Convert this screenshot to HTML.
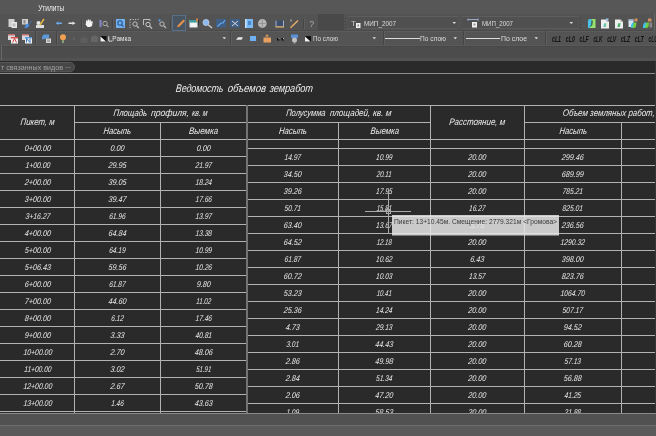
<!DOCTYPE html>
<html><head><meta charset="utf-8">
<style>
html,body{margin:0;padding:0;}
body{width:656px;height:436px;overflow:hidden;position:relative;background:#545454;font-family:"Liberation Sans",sans-serif;}
.a{position:absolute;}
#menu{left:0;top:0;width:656px;height:14px;background:#575757;}
#tb1{left:0;top:14px;width:656px;height:17px;background:#535353;}
#tb2{left:0;top:31px;width:656px;height:14px;background:#545454;}
#band{left:0;top:45px;width:656px;height:16px;background:#4c4c4c;}
#strip{left:0;top:61px;width:656px;height:13px;background:#2a2a2a;}
#draw{left:0;top:74px;width:656px;height:340px;background:#2a2a2a;}
#bottom{left:0;top:413px;width:656px;height:23px;background:#545454;}
svg{will-change:transform;}
svg text{font-family:"Liberation Sans",sans-serif;font-style:italic;}

</style></head><body>
<div id="menu" class="a"></div>
<div id="tb1" class="a"></div>
<div id="tb2" class="a"></div>
<div id="band" class="a"></div>
<div id="strip" class="a"></div>
<div id="draw" class="a"></div>
<div id="bottom" class="a"></div>

<svg class="a" style="left:0;top:0" width="656" height="436" viewBox="0 0 656 436">
<rect x="2" y="30" width="652" height="1" fill="#4a4a4a" />
<rect x="2" y="31" width="652" height="1" fill="#5c5c5c" />
<rect x="318" y="14" width="26" height="16" fill="#494949" />
<rect x="348" y="16" width="110" height="13" fill="#505050" />
<rect x="348" y="16" width="110" height="1" fill="#5e5e5e" />
<rect x="348" y="28" width="110" height="1" fill="#5c5c5c" />
<rect x="462" y="16" width="116" height="13" fill="#505050" />
<rect x="462" y="16" width="116" height="1" fill="#5e5e5e" />
<rect x="462" y="28" width="116" height="1" fill="#5c5c5c" />
<rect x="345" y="18" width="1" height="1" fill="#3c3c3c" />
<rect x="345" y="21" width="1" height="1" fill="#3c3c3c" />
<rect x="345" y="24" width="1" height="1" fill="#3c3c3c" />
<rect x="345" y="27" width="1" height="1" fill="#3c3c3c" />
<rect x="580" y="18" width="1" height="1" fill="#3c3c3c" />
<rect x="580" y="21" width="1" height="1" fill="#3c3c3c" />
<rect x="580" y="24" width="1" height="1" fill="#3c3c3c" />
<rect x="580" y="27" width="1" height="1" fill="#3c3c3c" />
<rect x="8.5" y="19" width="6" height="8" fill="#cfcfcf" />
<rect x="11.5" y="22" width="5.5" height="6" fill="#e6e6e6" />
<rect x="12.5" y="23.5" width="3" height="3" fill="#bdbdbd" />
<rect x="22" y="19" width="6" height="5.5" fill="#d0d0d0" />
<rect x="23.5" y="20" width="2" height="3.5" fill="#8a8a8a" />
<path d="M24.5,28 L25.5,25 L28,23.5 L29.5,25 L28,27.5 Z" fill="#4a8fe0" />
<path d="M28.5,24.5 L32,20.5" fill="none" stroke="#3a70c0" stroke-width="1" />
<circle cx="38.5" cy="23" r="2" fill="#e8e8e8"/>
<rect x="36" y="25" width="8" height="3" fill="#dedede" />
<path d="M40,25 L44,19" fill="none" stroke="#e0b040" stroke-width="1.6" />
<path d="M55.5,23.2 L58.5,21.5 L58.5,22.6 L62,22.6 L62,23.9 L58.5,23.9 L58.5,25 Z" fill="#6aa8e8" />
<path d="M75.5,23.2 L72.5,21.5 L72.5,22.6 L68.5,22.6 L68.5,23.9 L72.5,23.9 L72.5,25 Z" fill="#e2e2e2" />
<rect x="81" y="19" width="1" height="10" fill="#454545" />
<rect x="82" y="19" width="1" height="10" fill="#5e5e5e" />
<path d="M86,23 L86,20.5 L87.2,20.5 L87.5,22 L87.7,19.5 L89,19.5 L89.2,22 L89.5,19.8 L90.8,19.8 L91,22.5 L91.6,21 L92.8,21.5 L92,26 L90,27 L87.5,27 L85.5,24.5 Z" fill="#f2f2f2" />
<rect x="99.5" y="20" width="2" height="7" fill="#8888c8" />
<circle cx="105" cy="23.5" r="2.2" fill="none" stroke="#aaaaaa" stroke-width="1"/>
<path d="M106.6,25.2 L108.5,27.2" fill="none" stroke="#aaaaaa" stroke-width="1.2" />
<rect x="112" y="19" width="1" height="10" fill="#454545" />
<rect x="113" y="19" width="1" height="10" fill="#5e5e5e" />
<rect x="116" y="19" width="9" height="9" fill="#70b0ee" />
<circle cx="120" cy="23" r="2.2" fill="none" stroke="#2a5590" stroke-width="1.1"/>
<path d="M121.6,24.6 L123.5,26.6" fill="none" stroke="#2a5590" stroke-width="1.3" />
<path d="M130,19.5 L139,19.5 M130,19.5 L130,28" fill="none" stroke="#bdbdbd" stroke-width="1" stroke-dasharray="1.2,1.3"/>
<circle cx="135" cy="24" r="2.2" fill="none" stroke="#bdbdbd" stroke-width="1"/>
<path d="M136.6,25.6 L138.8,28" fill="none" stroke="#bdbdbd" stroke-width="1.2" />
<path d="M143.5,25 L143.5,19.5 L150,19.5 L150,21" fill="none" stroke="#bdbdbd" stroke-width="1" />
<circle cx="148" cy="24.5" r="2.2" fill="none" stroke="#c8c8c8" stroke-width="1"/>
<path d="M149.6,26.1 L152,28.5" fill="none" stroke="#c8c8c8" stroke-width="1.2" />
<path d="M158,19.5 L161,19.5 L159.5,22 Z" fill="#5aa0e8" />
<circle cx="162" cy="24" r="2.2" fill="none" stroke="#bdbdbd" stroke-width="1"/>
<path d="M163.6,25.6 L166,28" fill="none" stroke="#bdbdbd" stroke-width="1.2" />
<rect x="170" y="19" width="1" height="10" fill="#454545" />
<rect x="171" y="19" width="1" height="10" fill="#5e5e5e" />
<rect x="172.5" y="15.5" width="13" height="15" fill="#4a5562" stroke="#557088" stroke-width="1"/>
<path d="M177,27.5 L178,25 L183.5,19.5 L185,21 L179.5,26.5 Z" fill="#e8924a" />
<rect x="189.5" y="20" width="8" height="7.5" fill="#e6eef0" />
<rect x="189.5" y="20" width="8" height="2.5" fill="#3c9a9a" />
<rect x="191" y="23.5" width="5" height="3" fill="#f6f6f6" />
<rect x="196" y="18.5" width="2" height="3" fill="#d08040" />
<rect x="198" y="20" width="1" height="5" fill="#303030" />
<circle cx="206" cy="22.5" r="3" fill="#8cb8f0" stroke="#c0d0e8" stroke-width="0.8"/>
<path d="M208.2,24.7 L212,28" fill="none" stroke="#c8c8c8" stroke-width="1.5" />
<rect x="216" y="19" width="10" height="8.5" fill="#3f5f86" />
<path d="M217.5,26.5 L221,23 L223,23 L225,20" fill="none" stroke="#64aef0" stroke-width="1.1" />
<rect x="230" y="19" width="10" height="8.5" fill="#3f5f86" />
<path d="M232,21 L238,26 M238,21 L232,26" fill="none" stroke="#d8d8d8" stroke-width="1" />
<rect x="245" y="19" width="8" height="9" fill="#7ab9f2" />
<rect x="245" y="19" width="1.5" height="9" fill="#c8e0f8" />
<rect x="248" y="21" width="3" height="4" fill="#4a88d0" />
<circle cx="262.3" cy="23.5" r="4.4" fill="#b8b8b8"/>
<path d="M262.3,19.5 L262.3,27.5 M258.5,23.5 L266,23.5" fill="none" stroke="#8a8a8a" stroke-width="0.7" />
<rect x="275.5" y="20.5" width="8.5" height="6" fill="#3e4e6a" />
<rect x="275.5" y="20.5" width="1" height="6" fill="#9fb0d0" />
<rect x="283" y="20.5" width="1" height="6" fill="#9fb0d0" />
<rect x="275.5" y="26.3" width="8.5" height="1.2" fill="#e8c070" />
<path d="M290.5,27.8 L298,20.5" fill="none" stroke="#e8b068" stroke-width="1.4" />
<rect x="290.5" y="19.5" width="1" height="2" fill="#cccccc" />
<rect x="303" y="19" width="1" height="10" fill="#454545" />
<rect x="304" y="19" width="1" height="10" fill="#5e5e5e" />
<text x="309.5" y="27" font-size="8.2" fill="#b0b0b0" style="font-style:normal" >?</text>
<text x="351" y="26.4" font-size="8" fill="#c8c8c8" style="font-style:normal" >T</text>
<rect x="356" y="23" width="4.5" height="5" fill="#f0f0f0" />
<rect x="357.5" y="24.5" width="1.5" height="2" fill="#888" />
<text x="364" y="26.2" font-size="7.2" fill="#dcdcdc" style="font-style:normal" textLength="32" lengthAdjust="spacingAndGlyphs">МИП_2007</text>
<path d="M452.5,22 L456,22 L454.25,24 Z" fill="#e0e0e0" />
<path d="M468,19.5 L478,19.5 M468,18.5 L468,21 M478,18.5 L478,21" fill="none" stroke="#98a8c8" stroke-width="1" />
<rect x="472" y="22" width="5" height="5.5" fill="#f0f0f0" />
<rect x="473.5" y="23.5" width="2" height="2" fill="#999" />
<text x="482" y="26.2" font-size="7.2" fill="#dcdcdc" style="font-style:normal" textLength="31" lengthAdjust="spacingAndGlyphs">МИП_2007</text>
<path d="M569.5,22 L573,22 L571.25,24 Z" fill="#e0e0e0" />
<defs><linearGradient id="jg" x1="0" y1="0" x2="1" y2="0"><stop offset="0" stop-color="#40b8e8"/><stop offset="1" stop-color="#90d870"/></linearGradient></defs>
<path d="M588,21 Q588,19 590,19 L591.7,19 L591.7,28 L588,28 Z" fill="#48c4e8" />
<path d="M591.7,19 L595.5,19 L595.5,28 L589.5,28 L591.7,25 Z" fill="#96e070" />
<path d="M592.2,20.5 L591.8,24.8 L590.2,26.5" fill="none" stroke="#1e3a3a" stroke-width="1" />
<path d="M601,19.5 L606.5,19.5 L609,22.0 L609,28.5 L601,28.5 Z" fill="#eeeeee" />
<path d="M606.5,19.5 L606.5,22.0 L609,22.0 Z" fill="#b8b8b8" />
<path d="M603.5,27 L604,23.5 L606.5,23 L606,27 Z" fill="url(#jg)" />
<rect x="606" y="18.5" width="2.5" height="2" fill="#9ac0e8" />
<path d="M615,19.5 L620.5,19.5 L623,22.0 L623,28.5 L615,28.5 Z" fill="#eeeeee" />
<path d="M620.5,19.5 L620.5,22.0 L623,22.0 Z" fill="#b8b8b8" />
<path d="M617.5,27 L618,23.5 L620.5,23 L620,27 Z" fill="#50b070" />
<rect x="628.5" y="19.5" width="5" height="7.5" fill="#d8e4f0" />
<rect x="628.5" y="19.5" width="5" height="1.5" fill="#a0b8d0" />
<path d="M631,28 Q630.5,25 632,23 L634,22.5 L634,27.5 Z" fill="#40c0e8" />
<path d="M634,22.5 L636.5,22.5 L636,26.5 Q635,28.5 632.5,28 Z" fill="#70d040" />
<rect x="634.5" y="18.5" width="3" height="3" fill="#d09060" />
<path d="M643,28 Q642.5,24.5 644.5,22.5 L646.5,22.5 L646.5,28 Z" fill="#40c0e8" />
<path d="M646.5,22.5 L649,22.5 L648.5,26.5 Q647.5,28.5 645,28 Z" fill="#70d040" />
<rect x="648" y="18.5" width="3.5" height="3" fill="#d09060" />
<rect x="649.5" y="22.5" width="2.5" height="5" fill="#8a8a8a" />
<rect x="654" y="14" width="1" height="17" fill="#686868" />
<rect x="35" y="31" width="1" height="14" fill="#454545" />
<rect x="36" y="31" width="1" height="14" fill="#5e5e5e" />
<rect x="56" y="31" width="1" height="14" fill="#454545" />
<rect x="57" y="31" width="1" height="14" fill="#5e5e5e" />
<rect x="230" y="31" width="1" height="14" fill="#454545" />
<rect x="231" y="31" width="1" height="14" fill="#5e5e5e" />
<rect x="383" y="31" width="1" height="14" fill="#454545" />
<rect x="384" y="31" width="1" height="14" fill="#5e5e5e" />
<rect x="463" y="31" width="1" height="14" fill="#454545" />
<rect x="464" y="31" width="1" height="14" fill="#5e5e5e" />
<rect x="545" y="31" width="1" height="14" fill="#454545" />
<rect x="546" y="31" width="1" height="14" fill="#5e5e5e" />
<rect x="8" y="34" width="7" height="6" fill="#d8d8d8" />
<rect x="8" y="34" width="7" height="1.5" fill="#c07070" />
<rect x="11" y="37" width="7" height="6.5" fill="#f0f0f0" />
<rect x="11" y="37" width="7" height="1.5" fill="#d05050" />
<path d="M12.5,42.5 L14.5,38.5 L16.5,42.5" fill="none" stroke="#d04040" stroke-width="1" />
<rect x="22" y="34" width="7" height="6" fill="#d8d8d8" />
<rect x="22" y="34" width="7" height="1.5" fill="#c07070" />
<rect x="25" y="37" width="7" height="6.5" fill="#f0f0f0" />
<rect x="25" y="37" width="7" height="1.5" fill="#5a9ad8" />
<path d="M26.5,42.5 L26.5,38.5 L30,42.5 L30,38.5" fill="none" stroke="#3a7ac0" stroke-width="1" />
<path d="M42,38.5 Q42,34.5 45,34.5 L49,34.5 L49,38 Q45,38.5 42,39.5 Z" fill="#5b9ad8" />
<rect x="46" y="38.5" width="5" height="4.5" fill="#d8d8d8" />
<rect x="47" y="39.5" width="3" height="2.5" fill="#a8a8a8" />
<circle cx="63" cy="37.3" r="3" fill="#f0a050"/>
<rect x="62" y="40" width="2" height="3" fill="#8aa070" />
<circle cx="73.8" cy="38.5" r="1.6" fill="#606060"/>
<rect x="80.5" y="38" width="7" height="5" fill="#5e5e5e" />
<rect x="84" y="36" width="1" height="2" fill="#5e5e5e" />
<path d="M91,42 L91,38 Q91,35.5 94.5,35.5 Q98,35.5 98,38 L98,42 Z" fill="#666666" />
<rect x="100.5" y="36" width="6" height="5.5" fill="#111111" />
<path d="M100.5,36.5 L106,41.5 L100.5,41.5 Z" fill="#f4f4f4" />
<rect x="108.3" y="36.3" width="1" height="4.6" fill="#e4e4e4" />
<rect x="108.8" y="40.6" width="3.5" height="1" fill="#d8d8d8" />
<text x="112.3" y="40.9" font-size="6.9" fill="#e4e4e4" style="font-style:normal" textLength="18.7" lengthAdjust="spacingAndGlyphs">Рамка</text>
<path d="M222.5,37.3 L226,37.3 L224.25,39.3 Z" fill="#e0e0e0" />
<path d="M236,39.8 L238,37.3 L243,37.3 L241.5,39.8 Z" fill="#e8e8e8" />
<rect x="250" y="36" width="6" height="5" fill="#70b0f0" />
<rect x="263.5" y="37.5" width="7.5" height="5" fill="#e8a060" />
<path d="M265,36.5 L267,34.3 L269,36.5 Z" fill="#e8a060" />
<rect x="277" y="38" width="2.5" height="2.5" fill="#101010" />
<rect x="281.5" y="38" width="2.5" height="2.5" fill="#101010" />
<rect x="278.5" y="38.2" width="1" height="1" fill="#f0f0f0" />
<rect x="283" y="38.2" width="1" height="1" fill="#f0f0f0" />
<rect x="291" y="34.5" width="7" height="3.5" fill="#5a90d8" />
<circle cx="294.5" cy="40" r="2.5" fill="#c0c0c0"/>
<rect x="293.5" y="42" width="2" height="1.5" fill="#a0a0a0" />
<rect x="305" y="36" width="6" height="5.5" fill="#111111" />
<path d="M305,36.5 L310.5,41.5 L305,41.5 Z" fill="#f4f4f4" />
<text x="313" y="41.1" font-size="7.6" fill="#dedede" style="font-style:normal" textLength="25" lengthAdjust="spacingAndGlyphs">По слою</text>
<path d="M372.5,37.3 L376,37.3 L374.25,39.3 Z" fill="#e0e0e0" />
<rect x="385" y="38" width="35" height="1" fill="#dcdcdc" />
<text x="420" y="41.1" font-size="7.6" fill="#dedede" style="font-style:normal" textLength="26" lengthAdjust="spacingAndGlyphs">По слою</text>
<path d="M453.5,37.3 L457,37.3 L455.25,39.3 Z" fill="#e0e0e0" />
<rect x="466" y="38" width="34" height="1" fill="#dcdcdc" />
<text x="501" y="41.1" font-size="7.6" fill="#dedede" style="font-style:normal" textLength="26" lengthAdjust="spacingAndGlyphs">По слое</text>
<path d="M534.5,37.3 L538,37.3 L536.25,39.3 Z" fill="#e0e0e0" />
<text x="552.0" y="42" font-size="9.2" fill="#111111" style="font-style:italic;font-weight:bold" textLength="9" lengthAdjust="spacingAndGlyphs">cL1</text>
<text x="565.8" y="42" font-size="9.2" fill="#111111" style="font-style:italic;font-weight:bold" textLength="9" lengthAdjust="spacingAndGlyphs">cL0</text>
<text x="579.6" y="42" font-size="9.2" fill="#111111" style="font-style:italic;font-weight:bold" textLength="9" lengthAdjust="spacingAndGlyphs">cLF</text>
<text x="593.4" y="42" font-size="9.2" fill="#111111" style="font-style:italic;font-weight:bold" textLength="9" lengthAdjust="spacingAndGlyphs">cLK</text>
<text x="607.2" y="42" font-size="9.2" fill="#111111" style="font-style:italic;font-weight:bold" textLength="9" lengthAdjust="spacingAndGlyphs">cLV</text>
<text x="621.0" y="42" font-size="9.2" fill="#111111" style="font-style:italic;font-weight:bold" textLength="9" lengthAdjust="spacingAndGlyphs">cLZ</text>
<text x="634.8" y="42" font-size="9.2" fill="#111111" style="font-style:italic;font-weight:bold" textLength="9" lengthAdjust="spacingAndGlyphs">cLT</text>
<text x="648.6" y="42" font-size="9.2" fill="#111111" style="font-style:italic;font-weight:bold" textLength="9" lengthAdjust="spacingAndGlyphs">cLU</text>
<rect x="0" y="45" width="656" height="1" fill="#5a5a5a" />
<rect x="0" y="46" width="656" height="1" fill="#474747" />
<rect x="0" y="58" width="656" height="3" fill="#525252" />
<g class="tb">
<rect x="0" y="105" width="656" height="1" fill="#b2b2b2"/>
<rect x="74" y="122" width="357" height="1" fill="#b2b2b2"/>
<rect x="524" y="122" width="132" height="1" fill="#b2b2b2"/>
<rect x="0" y="139" width="656" height="1" fill="#b2b2b2"/>
<rect x="0" y="156" width="248" height="1" fill="#b2b2b2"/>
<rect x="0" y="173" width="248" height="1" fill="#b2b2b2"/>
<rect x="0" y="190" width="248" height="1" fill="#b2b2b2"/>
<rect x="0" y="207" width="248" height="1" fill="#b2b2b2"/>
<rect x="0" y="224" width="248" height="1" fill="#b2b2b2"/>
<rect x="0" y="241" width="248" height="1" fill="#b2b2b2"/>
<rect x="0" y="258" width="248" height="1" fill="#b2b2b2"/>
<rect x="0" y="275" width="248" height="1" fill="#b2b2b2"/>
<rect x="0" y="292" width="248" height="1" fill="#b2b2b2"/>
<rect x="0" y="309" width="248" height="1" fill="#b2b2b2"/>
<rect x="0" y="326" width="248" height="1" fill="#b2b2b2"/>
<rect x="0" y="343" width="248" height="1" fill="#b2b2b2"/>
<rect x="0" y="360" width="248" height="1" fill="#b2b2b2"/>
<rect x="0" y="377" width="248" height="1" fill="#b2b2b2"/>
<rect x="0" y="394" width="248" height="1" fill="#b2b2b2"/>
<rect x="0" y="411" width="248" height="1" fill="#b2b2b2"/>
<rect x="247" y="148" width="409" height="1" fill="#b2b2b2"/>
<rect x="247" y="165" width="409" height="1" fill="#b2b2b2"/>
<rect x="247" y="182" width="409" height="1" fill="#b2b2b2"/>
<rect x="247" y="199" width="409" height="1" fill="#b2b2b2"/>
<rect x="247" y="216" width="409" height="1" fill="#b2b2b2"/>
<rect x="247" y="233" width="409" height="1" fill="#b2b2b2"/>
<rect x="247" y="250" width="409" height="1" fill="#b2b2b2"/>
<rect x="247" y="267" width="409" height="1" fill="#b2b2b2"/>
<rect x="247" y="284" width="409" height="1" fill="#b2b2b2"/>
<rect x="247" y="301" width="409" height="1" fill="#b2b2b2"/>
<rect x="247" y="318" width="409" height="1" fill="#b2b2b2"/>
<rect x="247" y="335" width="409" height="1" fill="#b2b2b2"/>
<rect x="247" y="352" width="409" height="1" fill="#b2b2b2"/>
<rect x="247" y="369" width="409" height="1" fill="#b2b2b2"/>
<rect x="247" y="386" width="409" height="1" fill="#b2b2b2"/>
<rect x="247" y="403" width="409" height="1" fill="#b2b2b2"/>
<rect x="74" y="105" width="1" height="308" fill="#b2b2b2"/>
<rect x="160" y="122" width="1" height="291" fill="#b2b2b2"/>
<rect x="338" y="122" width="1" height="291" fill="#b2b2b2"/>
<rect x="430" y="105" width="1" height="308" fill="#b2b2b2"/>
<rect x="524" y="105" width="1" height="308" fill="#b2b2b2"/>
<rect x="621" y="122" width="1" height="291" fill="#b2b2b2"/>
<rect x="246" y="105" width="2" height="308" fill="#737373"/>
<text x="37.3" y="124.9" font-size="9.6" text-anchor="middle" fill="#ececec" textLength="34.0" lengthAdjust="spacingAndGlyphs" transform="translate(37.3,124.9) skewX(-6) translate(-37.3,-124.9)">Пикет, м</text>
<text x="113.3" y="116.0" font-size="9.6" text-anchor="start" fill="#ececec" textLength="33.5" lengthAdjust="spacingAndGlyphs" transform="translate(113.3,116.0) skewX(-6) translate(-113.3,-116.0)">Площадь</text>
<text x="150.7" y="116.0" font-size="9.6" text-anchor="start" fill="#ececec" textLength="38.1" lengthAdjust="spacingAndGlyphs" transform="translate(150.7,116.0) skewX(-6) translate(-150.7,-116.0)">профиля,</text>
<text x="191.8" y="116.0" font-size="9.6" text-anchor="start" fill="#ececec" textLength="15.5" lengthAdjust="spacingAndGlyphs" transform="translate(191.8,116.0) skewX(-6) translate(-191.8,-116.0)">кв. м</text>
<text x="117" y="133.8" font-size="9.6" text-anchor="middle" fill="#ececec" textLength="27.7" lengthAdjust="spacingAndGlyphs" transform="translate(117,133.8) skewX(-6) translate(-117,-133.8)">Насыпь</text>
<text x="203.3" y="133.8" font-size="9.6" text-anchor="middle" fill="#ececec" textLength="29.0" lengthAdjust="spacingAndGlyphs" transform="translate(203.3,133.8) skewX(-6) translate(-203.3,-133.8)">Выемка</text>
<text x="285.9" y="116.0" font-size="9.6" text-anchor="start" fill="#ececec" textLength="39.4" lengthAdjust="spacingAndGlyphs" transform="translate(285.9,116.0) skewX(-6) translate(-285.9,-116.0)">Полусумма</text>
<text x="329.7" y="116.0" font-size="9.6" text-anchor="start" fill="#ececec" textLength="40.3" lengthAdjust="spacingAndGlyphs" transform="translate(329.7,116.0) skewX(-6) translate(-329.7,-116.0)">площадей,</text>
<text x="372.7" y="116.0" font-size="9.6" text-anchor="start" fill="#ececec" textLength="18.6" lengthAdjust="spacingAndGlyphs" transform="translate(372.7,116.0) skewX(-6) translate(-372.7,-116.0)">кв. м</text>
<text x="292.6" y="133.8" font-size="9.6" text-anchor="middle" fill="#ececec" textLength="27.8" lengthAdjust="spacingAndGlyphs" transform="translate(292.6,133.8) skewX(-6) translate(-292.6,-133.8)">Насыпь</text>
<text x="384.5" y="133.8" font-size="9.6" text-anchor="middle" fill="#ececec" textLength="28.5" lengthAdjust="spacingAndGlyphs" transform="translate(384.5,133.8) skewX(-6) translate(-384.5,-133.8)">Выемка</text>
<text x="477" y="124.9" font-size="9.6" text-anchor="middle" fill="#ececec" textLength="56.0" lengthAdjust="spacingAndGlyphs" transform="translate(477,124.9) skewX(-6) translate(-477,-124.9)">Расстояние, м</text>
<text x="562.6" y="116.0" font-size="9.6" text-anchor="start" fill="#ececec" textLength="92.0" lengthAdjust="spacingAndGlyphs" transform="translate(562.6,116.0) skewX(-6) translate(-562.6,-116.0)">Объем земляных работ,</text>
<text x="573" y="133.8" font-size="9.6" text-anchor="middle" fill="#ececec" textLength="27.5" lengthAdjust="spacingAndGlyphs" transform="translate(573,133.8) skewX(-6) translate(-573,-133.8)">Насыпь</text>
<text x="175.6" y="92.4" font-size="11.2" text-anchor="start" fill="#ececec" textLength="47.6" lengthAdjust="spacingAndGlyphs" transform="translate(175.6,92.4) skewX(-6) translate(-175.6,-92.4)">Ведомость</text>
<text x="227.4" y="92.4" font-size="11.2" text-anchor="start" fill="#ececec" textLength="38.3" lengthAdjust="spacingAndGlyphs" transform="translate(227.4,92.4) skewX(-6) translate(-227.4,-92.4)">объемов</text>
<text x="269.4" y="92.4" font-size="11.2" text-anchor="start" fill="#ececec" textLength="43.3" lengthAdjust="spacingAndGlyphs" transform="translate(269.4,92.4) skewX(-6) translate(-269.4,-92.4)">земработ</text>
<text x="37.6" y="151" font-size="8.4" text-anchor="middle" fill="#ececec" textLength="26.4" lengthAdjust="spacingAndGlyphs" transform="translate(37.6,151) skewX(-6) translate(-37.6,-151)">0+00.00</text>
<text x="117.2" y="151" font-size="8.4" text-anchor="middle" fill="#ececec" textLength="14.1" lengthAdjust="spacingAndGlyphs" transform="translate(117.2,151) skewX(-6) translate(-117.2,-151)">0.00</text>
<text x="203.5" y="151" font-size="8.4" text-anchor="middle" fill="#ececec" textLength="14.1" lengthAdjust="spacingAndGlyphs" transform="translate(203.5,151) skewX(-6) translate(-203.5,-151)">0.00</text>
<text x="37.6" y="168" font-size="8.4" text-anchor="middle" fill="#ececec" textLength="24.9" lengthAdjust="spacingAndGlyphs" transform="translate(37.6,168) skewX(-6) translate(-37.6,-168)">1+00.00</text>
<text x="117.2" y="168" font-size="8.4" text-anchor="middle" fill="#ececec" textLength="18.0" lengthAdjust="spacingAndGlyphs" transform="translate(117.2,168) skewX(-6) translate(-117.2,-168)">29.95</text>
<text x="203.5" y="168" font-size="8.4" text-anchor="middle" fill="#ececec" textLength="16.5" lengthAdjust="spacingAndGlyphs" transform="translate(203.5,168) skewX(-6) translate(-203.5,-168)">21.97</text>
<text x="37.6" y="185" font-size="8.4" text-anchor="middle" fill="#ececec" textLength="26.4" lengthAdjust="spacingAndGlyphs" transform="translate(37.6,185) skewX(-6) translate(-37.6,-185)">2+00.00</text>
<text x="117.2" y="185" font-size="8.4" text-anchor="middle" fill="#ececec" textLength="18.0" lengthAdjust="spacingAndGlyphs" transform="translate(117.2,185) skewX(-6) translate(-117.2,-185)">39.05</text>
<text x="203.5" y="185" font-size="8.4" text-anchor="middle" fill="#ececec" textLength="16.5" lengthAdjust="spacingAndGlyphs" transform="translate(203.5,185) skewX(-6) translate(-203.5,-185)">18.24</text>
<text x="37.6" y="202" font-size="8.4" text-anchor="middle" fill="#ececec" textLength="26.4" lengthAdjust="spacingAndGlyphs" transform="translate(37.6,202) skewX(-6) translate(-37.6,-202)">3+00.00</text>
<text x="117.2" y="202" font-size="8.4" text-anchor="middle" fill="#ececec" textLength="18.0" lengthAdjust="spacingAndGlyphs" transform="translate(117.2,202) skewX(-6) translate(-117.2,-202)">39.47</text>
<text x="203.5" y="202" font-size="8.4" text-anchor="middle" fill="#ececec" textLength="16.5" lengthAdjust="spacingAndGlyphs" transform="translate(203.5,202) skewX(-6) translate(-203.5,-202)">17.66</text>
<text x="37.6" y="219" font-size="8.4" text-anchor="middle" fill="#ececec" textLength="24.9" lengthAdjust="spacingAndGlyphs" transform="translate(37.6,219) skewX(-6) translate(-37.6,-219)">3+16.27</text>
<text x="117.2" y="219" font-size="8.4" text-anchor="middle" fill="#ececec" textLength="16.5" lengthAdjust="spacingAndGlyphs" transform="translate(117.2,219) skewX(-6) translate(-117.2,-219)">61.96</text>
<text x="203.5" y="219" font-size="8.4" text-anchor="middle" fill="#ececec" textLength="16.5" lengthAdjust="spacingAndGlyphs" transform="translate(203.5,219) skewX(-6) translate(-203.5,-219)">13.97</text>
<text x="37.6" y="236" font-size="8.4" text-anchor="middle" fill="#ececec" textLength="26.4" lengthAdjust="spacingAndGlyphs" transform="translate(37.6,236) skewX(-6) translate(-37.6,-236)">4+00.00</text>
<text x="117.2" y="236" font-size="8.4" text-anchor="middle" fill="#ececec" textLength="18.0" lengthAdjust="spacingAndGlyphs" transform="translate(117.2,236) skewX(-6) translate(-117.2,-236)">64.84</text>
<text x="203.5" y="236" font-size="8.4" text-anchor="middle" fill="#ececec" textLength="16.5" lengthAdjust="spacingAndGlyphs" transform="translate(203.5,236) skewX(-6) translate(-203.5,-236)">13.38</text>
<text x="37.6" y="253" font-size="8.4" text-anchor="middle" fill="#ececec" textLength="26.4" lengthAdjust="spacingAndGlyphs" transform="translate(37.6,253) skewX(-6) translate(-37.6,-253)">5+00.00</text>
<text x="117.2" y="253" font-size="8.4" text-anchor="middle" fill="#ececec" textLength="16.5" lengthAdjust="spacingAndGlyphs" transform="translate(117.2,253) skewX(-6) translate(-117.2,-253)">64.19</text>
<text x="203.5" y="253" font-size="8.4" text-anchor="middle" fill="#ececec" textLength="16.5" lengthAdjust="spacingAndGlyphs" transform="translate(203.5,253) skewX(-6) translate(-203.5,-253)">10.99</text>
<text x="37.6" y="270" font-size="8.4" text-anchor="middle" fill="#ececec" textLength="26.4" lengthAdjust="spacingAndGlyphs" transform="translate(37.6,270) skewX(-6) translate(-37.6,-270)">5+06.43</text>
<text x="117.2" y="270" font-size="8.4" text-anchor="middle" fill="#ececec" textLength="18.0" lengthAdjust="spacingAndGlyphs" transform="translate(117.2,270) skewX(-6) translate(-117.2,-270)">59.56</text>
<text x="203.5" y="270" font-size="8.4" text-anchor="middle" fill="#ececec" textLength="16.5" lengthAdjust="spacingAndGlyphs" transform="translate(203.5,270) skewX(-6) translate(-203.5,-270)">10.26</text>
<text x="37.6" y="287" font-size="8.4" text-anchor="middle" fill="#ececec" textLength="26.4" lengthAdjust="spacingAndGlyphs" transform="translate(37.6,287) skewX(-6) translate(-37.6,-287)">6+00.00</text>
<text x="117.2" y="287" font-size="8.4" text-anchor="middle" fill="#ececec" textLength="16.5" lengthAdjust="spacingAndGlyphs" transform="translate(117.2,287) skewX(-6) translate(-117.2,-287)">61.87</text>
<text x="203.5" y="287" font-size="8.4" text-anchor="middle" fill="#ececec" textLength="14.1" lengthAdjust="spacingAndGlyphs" transform="translate(203.5,287) skewX(-6) translate(-203.5,-287)">9.80</text>
<text x="37.6" y="304" font-size="8.4" text-anchor="middle" fill="#ececec" textLength="26.4" lengthAdjust="spacingAndGlyphs" transform="translate(37.6,304) skewX(-6) translate(-37.6,-304)">7+00.00</text>
<text x="117.2" y="304" font-size="8.4" text-anchor="middle" fill="#ececec" textLength="18.0" lengthAdjust="spacingAndGlyphs" transform="translate(117.2,304) skewX(-6) translate(-117.2,-304)">44.60</text>
<text x="203.5" y="304" font-size="8.4" text-anchor="middle" fill="#ececec" textLength="15.0" lengthAdjust="spacingAndGlyphs" transform="translate(203.5,304) skewX(-6) translate(-203.5,-304)">11.02</text>
<text x="37.6" y="321" font-size="8.4" text-anchor="middle" fill="#ececec" textLength="26.4" lengthAdjust="spacingAndGlyphs" transform="translate(37.6,321) skewX(-6) translate(-37.6,-321)">8+00.00</text>
<text x="117.2" y="321" font-size="8.4" text-anchor="middle" fill="#ececec" textLength="12.6" lengthAdjust="spacingAndGlyphs" transform="translate(117.2,321) skewX(-6) translate(-117.2,-321)">6.12</text>
<text x="203.5" y="321" font-size="8.4" text-anchor="middle" fill="#ececec" textLength="16.5" lengthAdjust="spacingAndGlyphs" transform="translate(203.5,321) skewX(-6) translate(-203.5,-321)">17.46</text>
<text x="37.6" y="338" font-size="8.4" text-anchor="middle" fill="#ececec" textLength="26.4" lengthAdjust="spacingAndGlyphs" transform="translate(37.6,338) skewX(-6) translate(-37.6,-338)">9+00.00</text>
<text x="117.2" y="338" font-size="8.4" text-anchor="middle" fill="#ececec" textLength="14.1" lengthAdjust="spacingAndGlyphs" transform="translate(117.2,338) skewX(-6) translate(-117.2,-338)">3.33</text>
<text x="203.5" y="338" font-size="8.4" text-anchor="middle" fill="#ececec" textLength="16.5" lengthAdjust="spacingAndGlyphs" transform="translate(203.5,338) skewX(-6) translate(-203.5,-338)">40.81</text>
<text x="37.6" y="355" font-size="8.4" text-anchor="middle" fill="#ececec" textLength="28.8" lengthAdjust="spacingAndGlyphs" transform="translate(37.6,355) skewX(-6) translate(-37.6,-355)">10+00.00</text>
<text x="117.2" y="355" font-size="8.4" text-anchor="middle" fill="#ececec" textLength="14.1" lengthAdjust="spacingAndGlyphs" transform="translate(117.2,355) skewX(-6) translate(-117.2,-355)">2.70</text>
<text x="203.5" y="355" font-size="8.4" text-anchor="middle" fill="#ececec" textLength="18.0" lengthAdjust="spacingAndGlyphs" transform="translate(203.5,355) skewX(-6) translate(-203.5,-355)">48.06</text>
<text x="37.6" y="372" font-size="8.4" text-anchor="middle" fill="#ececec" textLength="27.3" lengthAdjust="spacingAndGlyphs" transform="translate(37.6,372) skewX(-6) translate(-37.6,-372)">11+00.00</text>
<text x="117.2" y="372" font-size="8.4" text-anchor="middle" fill="#ececec" textLength="14.1" lengthAdjust="spacingAndGlyphs" transform="translate(117.2,372) skewX(-6) translate(-117.2,-372)">3.02</text>
<text x="203.5" y="372" font-size="8.4" text-anchor="middle" fill="#ececec" textLength="15.0" lengthAdjust="spacingAndGlyphs" transform="translate(203.5,372) skewX(-6) translate(-203.5,-372)">51.91</text>
<text x="37.6" y="389" font-size="8.4" text-anchor="middle" fill="#ececec" textLength="28.8" lengthAdjust="spacingAndGlyphs" transform="translate(37.6,389) skewX(-6) translate(-37.6,-389)">12+00.00</text>
<text x="117.2" y="389" font-size="8.4" text-anchor="middle" fill="#ececec" textLength="14.1" lengthAdjust="spacingAndGlyphs" transform="translate(117.2,389) skewX(-6) translate(-117.2,-389)">2.67</text>
<text x="203.5" y="389" font-size="8.4" text-anchor="middle" fill="#ececec" textLength="18.0" lengthAdjust="spacingAndGlyphs" transform="translate(203.5,389) skewX(-6) translate(-203.5,-389)">50.78</text>
<text x="37.6" y="406" font-size="8.4" text-anchor="middle" fill="#ececec" textLength="28.8" lengthAdjust="spacingAndGlyphs" transform="translate(37.6,406) skewX(-6) translate(-37.6,-406)">13+00.00</text>
<text x="117.2" y="406" font-size="8.4" text-anchor="middle" fill="#ececec" textLength="12.6" lengthAdjust="spacingAndGlyphs" transform="translate(117.2,406) skewX(-6) translate(-117.2,-406)">1.46</text>
<text x="203.5" y="406" font-size="8.4" text-anchor="middle" fill="#ececec" textLength="18.0" lengthAdjust="spacingAndGlyphs" transform="translate(203.5,406) skewX(-6) translate(-203.5,-406)">43.63</text>
<text x="292.5" y="160" font-size="8.4" text-anchor="middle" fill="#ececec" textLength="16.5" lengthAdjust="spacingAndGlyphs" transform="translate(292.5,160) skewX(-6) translate(-292.5,-160)">14.97</text>
<text x="384" y="160" font-size="8.4" text-anchor="middle" fill="#ececec" textLength="16.5" lengthAdjust="spacingAndGlyphs" transform="translate(384,160) skewX(-6) translate(-384,-160)">10.99</text>
<text x="477" y="160" font-size="8.4" text-anchor="middle" fill="#ececec" textLength="18.0" lengthAdjust="spacingAndGlyphs" transform="translate(477,160) skewX(-6) translate(-477,-160)">20.00</text>
<text x="572.5" y="160" font-size="8.4" text-anchor="middle" fill="#ececec" textLength="21.9" lengthAdjust="spacingAndGlyphs" transform="translate(572.5,160) skewX(-6) translate(-572.5,-160)">299.46</text>
<text x="292.5" y="177" font-size="8.4" text-anchor="middle" fill="#ececec" textLength="18.0" lengthAdjust="spacingAndGlyphs" transform="translate(292.5,177) skewX(-6) translate(-292.5,-177)">34.50</text>
<text x="384" y="177" font-size="8.4" text-anchor="middle" fill="#ececec" textLength="15.0" lengthAdjust="spacingAndGlyphs" transform="translate(384,177) skewX(-6) translate(-384,-177)">20.11</text>
<text x="477" y="177" font-size="8.4" text-anchor="middle" fill="#ececec" textLength="18.0" lengthAdjust="spacingAndGlyphs" transform="translate(477,177) skewX(-6) translate(-477,-177)">20.00</text>
<text x="572.5" y="177" font-size="8.4" text-anchor="middle" fill="#ececec" textLength="21.9" lengthAdjust="spacingAndGlyphs" transform="translate(572.5,177) skewX(-6) translate(-572.5,-177)">689.99</text>
<text x="292.5" y="194" font-size="8.4" text-anchor="middle" fill="#ececec" textLength="18.0" lengthAdjust="spacingAndGlyphs" transform="translate(292.5,194) skewX(-6) translate(-292.5,-194)">39.26</text>
<text x="384" y="194" font-size="8.4" text-anchor="middle" fill="#ececec" textLength="16.5" lengthAdjust="spacingAndGlyphs" transform="translate(384,194) skewX(-6) translate(-384,-194)">17.95</text>
<text x="477" y="194" font-size="8.4" text-anchor="middle" fill="#ececec" textLength="18.0" lengthAdjust="spacingAndGlyphs" transform="translate(477,194) skewX(-6) translate(-477,-194)">20.00</text>
<text x="572.5" y="194" font-size="8.4" text-anchor="middle" fill="#ececec" textLength="20.4" lengthAdjust="spacingAndGlyphs" transform="translate(572.5,194) skewX(-6) translate(-572.5,-194)">785.21</text>
<text x="292.5" y="211" font-size="8.4" text-anchor="middle" fill="#ececec" textLength="16.5" lengthAdjust="spacingAndGlyphs" transform="translate(292.5,211) skewX(-6) translate(-292.5,-211)">50.71</text>
<text x="384" y="211" font-size="8.4" text-anchor="middle" fill="#ececec" textLength="15.0" lengthAdjust="spacingAndGlyphs" transform="translate(384,211) skewX(-6) translate(-384,-211)">15.81</text>
<text x="477" y="211" font-size="8.4" text-anchor="middle" fill="#ececec" textLength="16.5" lengthAdjust="spacingAndGlyphs" transform="translate(477,211) skewX(-6) translate(-477,-211)">16.27</text>
<text x="572.5" y="211" font-size="8.4" text-anchor="middle" fill="#ececec" textLength="20.4" lengthAdjust="spacingAndGlyphs" transform="translate(572.5,211) skewX(-6) translate(-572.5,-211)">825.01</text>
<text x="292.5" y="228" font-size="8.4" text-anchor="middle" fill="#ececec" textLength="18.0" lengthAdjust="spacingAndGlyphs" transform="translate(292.5,228) skewX(-6) translate(-292.5,-228)">63.40</text>
<text x="384" y="228" font-size="8.4" text-anchor="middle" fill="#ececec" textLength="16.5" lengthAdjust="spacingAndGlyphs" transform="translate(384,228) skewX(-6) translate(-384,-228)">13.67</text>
<text x="477" y="228" font-size="8.4" text-anchor="middle" fill="#ececec" textLength="14.1" lengthAdjust="spacingAndGlyphs" transform="translate(477,228) skewX(-6) translate(-477,-228)">5.75</text>
<text x="572.5" y="228" font-size="8.4" text-anchor="middle" fill="#ececec" textLength="21.9" lengthAdjust="spacingAndGlyphs" transform="translate(572.5,228) skewX(-6) translate(-572.5,-228)">236.56</text>
<text x="292.5" y="245" font-size="8.4" text-anchor="middle" fill="#ececec" textLength="18.0" lengthAdjust="spacingAndGlyphs" transform="translate(292.5,245) skewX(-6) translate(-292.5,-245)">64.52</text>
<text x="384" y="245" font-size="8.4" text-anchor="middle" fill="#ececec" textLength="15.0" lengthAdjust="spacingAndGlyphs" transform="translate(384,245) skewX(-6) translate(-384,-245)">12.18</text>
<text x="477" y="245" font-size="8.4" text-anchor="middle" fill="#ececec" textLength="18.0" lengthAdjust="spacingAndGlyphs" transform="translate(477,245) skewX(-6) translate(-477,-245)">20.00</text>
<text x="572.5" y="245" font-size="8.4" text-anchor="middle" fill="#ececec" textLength="24.3" lengthAdjust="spacingAndGlyphs" transform="translate(572.5,245) skewX(-6) translate(-572.5,-245)">1290.32</text>
<text x="292.5" y="262" font-size="8.4" text-anchor="middle" fill="#ececec" textLength="16.5" lengthAdjust="spacingAndGlyphs" transform="translate(292.5,262) skewX(-6) translate(-292.5,-262)">61.87</text>
<text x="384" y="262" font-size="8.4" text-anchor="middle" fill="#ececec" textLength="16.5" lengthAdjust="spacingAndGlyphs" transform="translate(384,262) skewX(-6) translate(-384,-262)">10.62</text>
<text x="477" y="262" font-size="8.4" text-anchor="middle" fill="#ececec" textLength="14.1" lengthAdjust="spacingAndGlyphs" transform="translate(477,262) skewX(-6) translate(-477,-262)">6.43</text>
<text x="572.5" y="262" font-size="8.4" text-anchor="middle" fill="#ececec" textLength="21.9" lengthAdjust="spacingAndGlyphs" transform="translate(572.5,262) skewX(-6) translate(-572.5,-262)">398.00</text>
<text x="292.5" y="279" font-size="8.4" text-anchor="middle" fill="#ececec" textLength="18.0" lengthAdjust="spacingAndGlyphs" transform="translate(292.5,279) skewX(-6) translate(-292.5,-279)">60.72</text>
<text x="384" y="279" font-size="8.4" text-anchor="middle" fill="#ececec" textLength="16.5" lengthAdjust="spacingAndGlyphs" transform="translate(384,279) skewX(-6) translate(-384,-279)">10.03</text>
<text x="477" y="279" font-size="8.4" text-anchor="middle" fill="#ececec" textLength="16.5" lengthAdjust="spacingAndGlyphs" transform="translate(477,279) skewX(-6) translate(-477,-279)">13.57</text>
<text x="572.5" y="279" font-size="8.4" text-anchor="middle" fill="#ececec" textLength="21.9" lengthAdjust="spacingAndGlyphs" transform="translate(572.5,279) skewX(-6) translate(-572.5,-279)">823.76</text>
<text x="292.5" y="296" font-size="8.4" text-anchor="middle" fill="#ececec" textLength="18.0" lengthAdjust="spacingAndGlyphs" transform="translate(292.5,296) skewX(-6) translate(-292.5,-296)">53.23</text>
<text x="384" y="296" font-size="8.4" text-anchor="middle" fill="#ececec" textLength="15.0" lengthAdjust="spacingAndGlyphs" transform="translate(384,296) skewX(-6) translate(-384,-296)">10.41</text>
<text x="477" y="296" font-size="8.4" text-anchor="middle" fill="#ececec" textLength="18.0" lengthAdjust="spacingAndGlyphs" transform="translate(477,296) skewX(-6) translate(-477,-296)">20.00</text>
<text x="572.5" y="296" font-size="8.4" text-anchor="middle" fill="#ececec" textLength="24.3" lengthAdjust="spacingAndGlyphs" transform="translate(572.5,296) skewX(-6) translate(-572.5,-296)">1064.70</text>
<text x="292.5" y="313" font-size="8.4" text-anchor="middle" fill="#ececec" textLength="18.0" lengthAdjust="spacingAndGlyphs" transform="translate(292.5,313) skewX(-6) translate(-292.5,-313)">25.36</text>
<text x="384" y="313" font-size="8.4" text-anchor="middle" fill="#ececec" textLength="16.5" lengthAdjust="spacingAndGlyphs" transform="translate(384,313) skewX(-6) translate(-384,-313)">14.24</text>
<text x="477" y="313" font-size="8.4" text-anchor="middle" fill="#ececec" textLength="18.0" lengthAdjust="spacingAndGlyphs" transform="translate(477,313) skewX(-6) translate(-477,-313)">20.00</text>
<text x="572.5" y="313" font-size="8.4" text-anchor="middle" fill="#ececec" textLength="20.4" lengthAdjust="spacingAndGlyphs" transform="translate(572.5,313) skewX(-6) translate(-572.5,-313)">507.17</text>
<text x="292.5" y="330" font-size="8.4" text-anchor="middle" fill="#ececec" textLength="14.1" lengthAdjust="spacingAndGlyphs" transform="translate(292.5,330) skewX(-6) translate(-292.5,-330)">4.73</text>
<text x="384" y="330" font-size="8.4" text-anchor="middle" fill="#ececec" textLength="16.5" lengthAdjust="spacingAndGlyphs" transform="translate(384,330) skewX(-6) translate(-384,-330)">29.13</text>
<text x="477" y="330" font-size="8.4" text-anchor="middle" fill="#ececec" textLength="18.0" lengthAdjust="spacingAndGlyphs" transform="translate(477,330) skewX(-6) translate(-477,-330)">20.00</text>
<text x="572.5" y="330" font-size="8.4" text-anchor="middle" fill="#ececec" textLength="18.0" lengthAdjust="spacingAndGlyphs" transform="translate(572.5,330) skewX(-6) translate(-572.5,-330)">94.52</text>
<text x="292.5" y="347" font-size="8.4" text-anchor="middle" fill="#ececec" textLength="12.6" lengthAdjust="spacingAndGlyphs" transform="translate(292.5,347) skewX(-6) translate(-292.5,-347)">3.01</text>
<text x="384" y="347" font-size="8.4" text-anchor="middle" fill="#ececec" textLength="18.0" lengthAdjust="spacingAndGlyphs" transform="translate(384,347) skewX(-6) translate(-384,-347)">44.43</text>
<text x="477" y="347" font-size="8.4" text-anchor="middle" fill="#ececec" textLength="18.0" lengthAdjust="spacingAndGlyphs" transform="translate(477,347) skewX(-6) translate(-477,-347)">20.00</text>
<text x="572.5" y="347" font-size="8.4" text-anchor="middle" fill="#ececec" textLength="18.0" lengthAdjust="spacingAndGlyphs" transform="translate(572.5,347) skewX(-6) translate(-572.5,-347)">60.28</text>
<text x="292.5" y="364" font-size="8.4" text-anchor="middle" fill="#ececec" textLength="14.1" lengthAdjust="spacingAndGlyphs" transform="translate(292.5,364) skewX(-6) translate(-292.5,-364)">2.86</text>
<text x="384" y="364" font-size="8.4" text-anchor="middle" fill="#ececec" textLength="18.0" lengthAdjust="spacingAndGlyphs" transform="translate(384,364) skewX(-6) translate(-384,-364)">49.98</text>
<text x="477" y="364" font-size="8.4" text-anchor="middle" fill="#ececec" textLength="18.0" lengthAdjust="spacingAndGlyphs" transform="translate(477,364) skewX(-6) translate(-477,-364)">20.00</text>
<text x="572.5" y="364" font-size="8.4" text-anchor="middle" fill="#ececec" textLength="16.5" lengthAdjust="spacingAndGlyphs" transform="translate(572.5,364) skewX(-6) translate(-572.5,-364)">57.13</text>
<text x="292.5" y="381" font-size="8.4" text-anchor="middle" fill="#ececec" textLength="14.1" lengthAdjust="spacingAndGlyphs" transform="translate(292.5,381) skewX(-6) translate(-292.5,-381)">2.84</text>
<text x="384" y="381" font-size="8.4" text-anchor="middle" fill="#ececec" textLength="16.5" lengthAdjust="spacingAndGlyphs" transform="translate(384,381) skewX(-6) translate(-384,-381)">51.34</text>
<text x="477" y="381" font-size="8.4" text-anchor="middle" fill="#ececec" textLength="18.0" lengthAdjust="spacingAndGlyphs" transform="translate(477,381) skewX(-6) translate(-477,-381)">20.00</text>
<text x="572.5" y="381" font-size="8.4" text-anchor="middle" fill="#ececec" textLength="18.0" lengthAdjust="spacingAndGlyphs" transform="translate(572.5,381) skewX(-6) translate(-572.5,-381)">56.88</text>
<text x="292.5" y="398" font-size="8.4" text-anchor="middle" fill="#ececec" textLength="14.1" lengthAdjust="spacingAndGlyphs" transform="translate(292.5,398) skewX(-6) translate(-292.5,-398)">2.06</text>
<text x="384" y="398" font-size="8.4" text-anchor="middle" fill="#ececec" textLength="18.0" lengthAdjust="spacingAndGlyphs" transform="translate(384,398) skewX(-6) translate(-384,-398)">47.20</text>
<text x="477" y="398" font-size="8.4" text-anchor="middle" fill="#ececec" textLength="18.0" lengthAdjust="spacingAndGlyphs" transform="translate(477,398) skewX(-6) translate(-477,-398)">20.00</text>
<text x="572.5" y="398" font-size="8.4" text-anchor="middle" fill="#ececec" textLength="16.5" lengthAdjust="spacingAndGlyphs" transform="translate(572.5,398) skewX(-6) translate(-572.5,-398)">41.25</text>
<text x="292.5" y="415" font-size="8.4" text-anchor="middle" fill="#ececec" textLength="12.6" lengthAdjust="spacingAndGlyphs" transform="translate(292.5,415) skewX(-6) translate(-292.5,-415)">1.09</text>
<text x="384" y="415" font-size="8.4" text-anchor="middle" fill="#ececec" textLength="18.0" lengthAdjust="spacingAndGlyphs" transform="translate(384,415) skewX(-6) translate(-384,-415)">58.53</text>
<text x="477" y="415" font-size="8.4" text-anchor="middle" fill="#ececec" textLength="18.0" lengthAdjust="spacingAndGlyphs" transform="translate(477,415) skewX(-6) translate(-477,-415)">20.00</text>
<text x="572.5" y="415" font-size="8.4" text-anchor="middle" fill="#ececec" textLength="16.5" lengthAdjust="spacingAndGlyphs" transform="translate(572.5,415) skewX(-6) translate(-572.5,-415)">21.88</text>
</g>
<text x="38.2" y="10.6" font-size="8.3" fill="#eeeeee" style="font-style:normal" textLength="26" lengthAdjust="spacingAndGlyphs">Утилиты</text>
<rect x="1" y="46" width="1" height="14" fill="#6a6a6a" />
<path d="M-5,62.5 L70,62.5 A4.6,4.6 0 0 1 70,71.7 L-5,71.7 Z" fill="#474747" stroke="#575757" stroke-width="1"/>
<text x="1" y="69.8" font-size="6.6" fill="#a0a0a0" style="font-style:normal" textLength="62" lengthAdjust="spacingAndGlyphs">т связанных видов</text>
<rect x="65.5" y="67" width="1" height="1" fill="#8a8a8a" />
<rect x="67.5" y="67" width="1" height="1" fill="#8a8a8a" />
<rect x="69.5" y="67" width="1" height="1" fill="#8a8a8a" />
<rect x="0" y="73" width="656" height="1" fill="#8c8c8c" />
<rect x="655" y="61" width="1" height="350" fill="#353535" />
<rect x="0" y="413" width="656" height="1" fill="#8a8a8a" />
<rect x="0" y="414" width="656" height="11" fill="#515151" />
<rect x="0" y="425" width="656" height="1" fill="#6e6e6e" />
<rect x="0" y="426" width="656" height="10" fill="#5a5a5a" />
<g>
<rect x="388" y="189" width="1" height="45" fill="#a8a8a8" />
<rect x="365" y="211" width="46" height="1" fill="#a8a8a8" />
<rect x="386.5" y="209.5" width="4" height="4" fill="none" stroke="#a8a8a8" stroke-width="1"/>
</g>
<rect x="392" y="215" width="167" height="20.5" fill="#e6e6e6" fill-opacity="0.85"/>
<text x="394" y="223.6" font-size="7.2" fill="#3a3a3a" style="font-style:normal" textLength="163" lengthAdjust="spacingAndGlyphs">Пикет: 13+10.45м. Смещение: 2779.321м &lt;Громова&gt;</text>
</svg>
</body></html>
